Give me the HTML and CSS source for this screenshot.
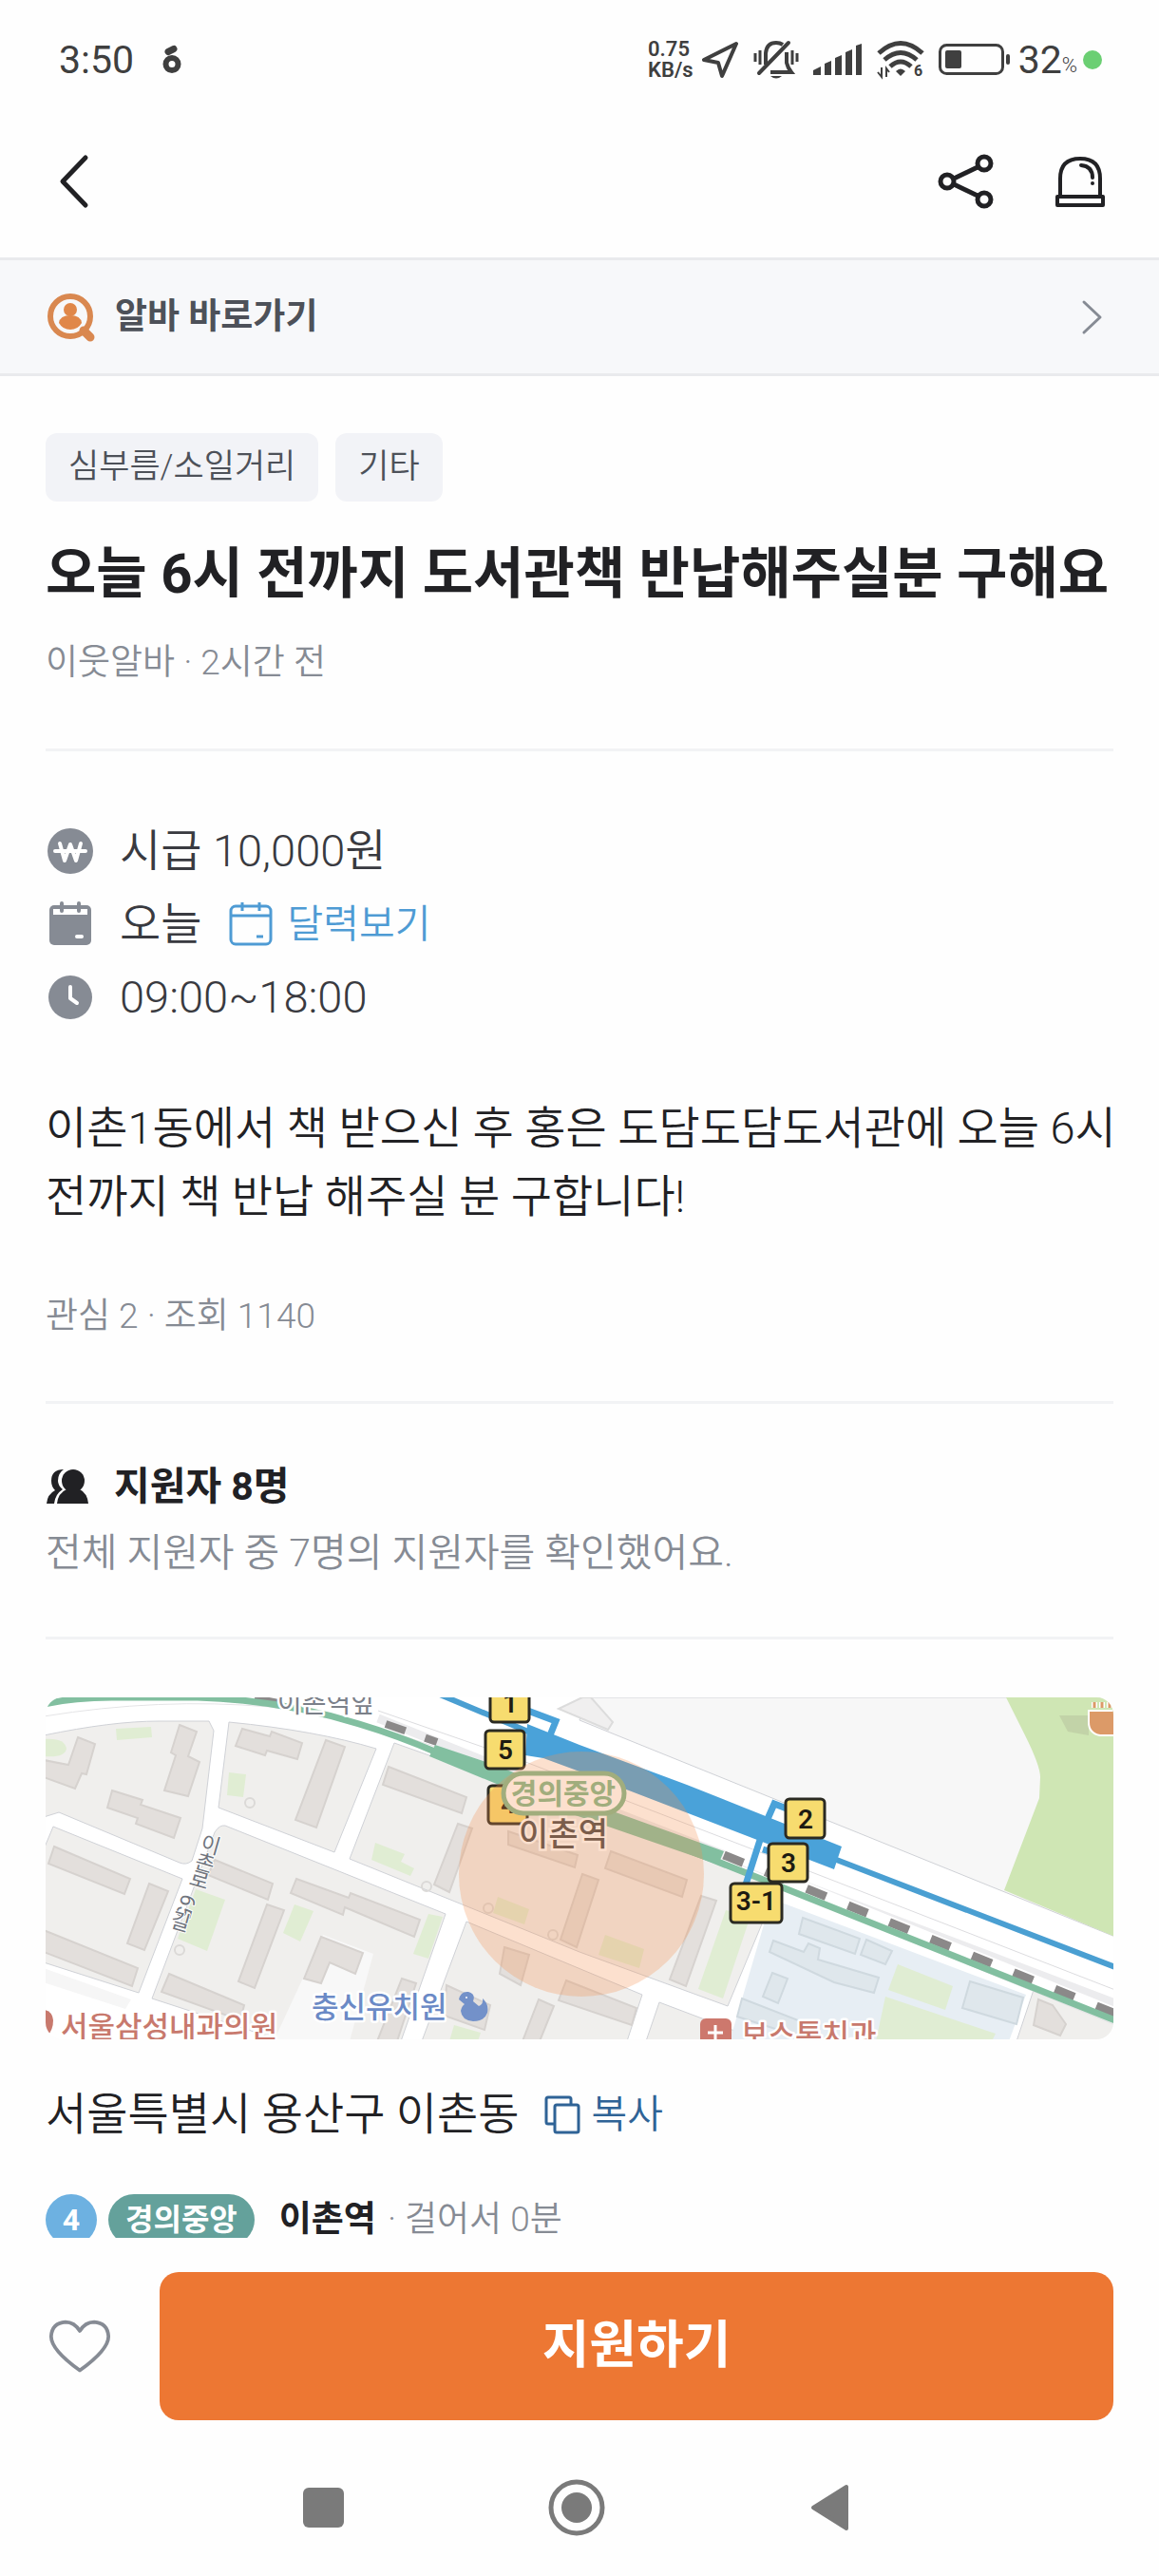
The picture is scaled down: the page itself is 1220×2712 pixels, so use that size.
FILE: index.html
```html
<!DOCTYPE html>
<html lang="ko">

<head>
<meta charset="utf-8">
<meta name="viewport" content="width=device-width, initial-scale=1">
<title>이웃알바</title>
<link rel="stylesheet" href="styles.css">
</head>

<body>

<div class="status">
  <span class="time">3:50</span>
  <svg class="app-icon" width="20" height="32" viewBox="0 0 20 32" aria-hidden="true">
    <circle cx="10" cy="20.500" r="6.500" fill="none" stroke="#3f3f3f" stroke-width="6"/>
    <path d="M6 7.500 L12 4.500" stroke="#3f3f3f" stroke-width="7" stroke-linecap="round"/>
  </svg>
  <div class="status-right">
    <span class="speed">0.75<br>KB/s</span>
    <svg width="40" height="40" viewBox="0 0 40 40" aria-hidden="true">
      <path d="M37 3 L3 20 L18 23 L22 37 Z" fill="none" stroke="#3f3f3f" stroke-width="4" stroke-linejoin="round"/>
    </svg>
    <svg class="ic-bell" width="48" height="42" viewBox="0 0 48 42" aria-hidden="true">
      <g fill="none" stroke="#3f3f3f" stroke-width="4">
        <path d="M13 26 V14 Q14 3 24 3 Q28 3 31 5"/>
        <path d="M35 13 V24 Q36 29 40 34 H18"/>
        <path d="M6 35 L37 3" stroke-linecap="round"/>
        <path d="M2 14 V23 M7 11 V26 M41 11 V26 M46 14 V23" stroke-width="3"/>
      </g>
      <path d="M18 38 H30 Q24 43 18 38 Z" fill="#3f3f3f"/>
    </svg>
    <svg class="ic-signal" width="52" height="34" viewBox="0 0 52 34" aria-hidden="true">
      <path d="M0 33 V28 L8 24 V33 Z M12 33 V21 L19 18 V33 Z M23 33 V15 L30 12 V33 Z M34 33 V9 L41 6 V33 Z M45 33 V2 L51 0 V33 Z" fill="#3f3f3f"/>
    </svg>
    <svg class="ic-wifi" width="50" height="42" viewBox="0 0 50 42" aria-hidden="true">
      <g fill="none" stroke="#3f3f3f" stroke-width="5">
        <path d="M2 14 Q25 -7 48 14"/>
        <path d="M8 21 Q25 6 42 21"/>
        <path d="M14 28 Q25 18 36 28"/>
      </g>
      <path d="M20 33 Q25 28 30 33 L25 38 Z" fill="#3f3f3f"/>
      <path d="M5 29 V39 L1 34 M10 39 V30 L13 34" fill="none" stroke="#3f3f3f" stroke-width="2"/>
      <text x="39" y="38" class="wifi-num">6</text>
    </svg>
    <svg class="ic-battery" width="76" height="34" viewBox="0 0 76 34" aria-hidden="true">
      <rect x="1.500" y="1.500" width="66" height="30" rx="7" fill="none" stroke="#3f3f3f" stroke-width="3"/>
      <rect x="7" y="7" width="17" height="19" rx="2" fill="#3f3f3f"/>
      <rect x="71" y="11" width="4" height="11" rx="2" fill="#3f3f3f"/>
    </svg>
    <span class="time">32</span><span class="percent">%</span>
    <span class="dot"></span>
  </div>
</div>

<header class="topbar">
  <button class="icon-btn" aria-label="뒤로">
    <svg width="60" height="60" viewBox="0 0 60 60">
      <path d="M42 5 L18 30 L42 55" fill="none" stroke="#212124" stroke-width="5" stroke-linecap="round" stroke-linejoin="round"/>
    </svg>
  </button>
  <button class="icon-btn share" aria-label="공유">
    <svg width="60" height="60" viewBox="0 0 60 60">
      <g fill="none" stroke="#212124" stroke-width="5">
        <circle cx="10" cy="30" r="7"/>
        <circle cx="49" cy="11" r="7"/>
        <circle cx="49" cy="49" r="7"/>
        <path d="M17 27 L42 15 M17 33 L42 45"/>
      </g>
    </svg>
  </button>
  <button class="icon-btn" aria-label="신고">
    <svg width="60" height="60" viewBox="0 0 60 60">
      <g fill="none" stroke="#212124" stroke-width="4" stroke-linejoin="round">
        <path d="M9 46 V27 Q9 6 30 6 Q51 6 51 27 V46"/>
        <rect x="6" y="46" width="48" height="9"/>
        <path d="M31 13 Q43 14 43 26" stroke-linecap="round"/>
      </g>
      <circle cx="43" cy="32" r="2" fill="#212124"/>
    </svg>
  </button>
</header>

<a class="shortcut" href="#">
  <svg width="52" height="52" viewBox="0 0 52 52" aria-hidden="true">
    <circle cx="25" cy="25" r="21" fill="none" stroke="#d98850" stroke-width="6"/>
    <path d="M39 40 L46 47" stroke="#d98850" stroke-width="9" stroke-linecap="round"/>
    <circle cx="25" cy="18" r="7" fill="#e08749"/>
    <path d="M13 32 Q14 24 25 24 Q36 24 37 32 Q33 39 25 39 Q17 39 13 32 Z" fill="#e08749"/>
  </svg>
  <span>알바 바로가기</span>
  <svg class="arrow" width="24" height="38" viewBox="0 0 24 38" aria-hidden="true">
    <path d="M3 3 L20 19 L3 35" fill="none" stroke="#868b94" stroke-width="3" stroke-linecap="round" stroke-linejoin="round"/>
  </svg>
</a>

<main>
  <section class="intro">
    <div class="tags">
      <span class="tag">심부름/소일거리</span>
      <span class="tag">기타</span>
    </div>
    <h1>오늘 6시 전까지 도서관책 반납해주실분 구해요</h1>
    <p class="meta">이웃알바 · 2시간 전</p>
  </section>

  <section class="detail">
    <ul class="facts">
      <li>
        <svg width="52" height="52" viewBox="0 0 52 52" aria-hidden="true">
          <circle cx="26" cy="26" r="24" fill="#868b94"/>
          <path d="M15 18 L20 36 L26 19 L32 36 L37 18 M10 26 H42" fill="none" stroke="#fff" stroke-width="4" stroke-linecap="round" stroke-linejoin="round"/>
        </svg>
        <span>시급 10,000원</span>
      </li>
      <li>
        <svg width="52" height="52" viewBox="0 0 52 52" aria-hidden="true">
          <rect x="4" y="6" width="44" height="42" rx="5" fill="#868b94"/>
          <path d="M8 10 H44 V16 H8 Z" fill="#fff"/>
          <path d="M17 4 V12 M35 4 V12" stroke="#868b94" stroke-width="4" stroke-linecap="round"/>
          <path d="M33 39 H38" stroke="#fff" stroke-width="4" stroke-linecap="round"/>
        </svg>
        <span>오늘</span>
        <a class="calendar" href="#">
          <svg width="52" height="52" viewBox="0 0 52 52" aria-hidden="true">
            <g fill="none" stroke="#4e9bd4" stroke-width="3">
              <rect x="5" y="7" width="42" height="40" rx="5"/>
              <path d="M5 17 H47"/>
              <path d="M17 3 V12 M35 3 V12"/>
              <path d="M32 39 H39"/>
            </g>
          </svg>
          달력보기
        </a>
      </li>
      <li>
        <svg width="52" height="52" viewBox="0 0 52 52" aria-hidden="true">
          <circle cx="26" cy="26" r="23" fill="#868b94"/>
          <path d="M26 15 V27 L33 32" fill="none" stroke="#fff" stroke-width="4" stroke-linecap="round" stroke-linejoin="round"/>
        </svg>
        <span>09:00~18:00</span>
      </li>
    </ul>
    <p class="desc">이촌1동에서 책 받으신 후 홍은 도담도담도서관에 오늘 6시<br>전까지 책 반납 해주실 분 구합니다!</p>
    <p class="meta">관심 2 · 조회 1140</p>
  </section>

  <section class="applicants">
    <h2>
      <svg width="46" height="40" viewBox="0 0 46 40" aria-hidden="true">
        <path d="M19 2 Q6 2 6 14 Q6 20 10 24 Q2 28 1 38 H9 Q10 28 18 23 Q13 19 13 14 Q13 6 19 2 Z" fill="#212124"/>
        <circle cx="29" cy="14" r="12" fill="#212124"/>
        <path d="M12 38 Q13 27 22 23 H36 Q44 27 45 38 Z" fill="#212124"/>
      </svg>
      지원자 8명
    </h2>
    <p>전체 지원자 중 7명의 지원자를 확인했어요.</p>
  </section>

  <section class="place">
    <svg class="map" viewBox="0 0 1124 360" preserveAspectRatio="xMidYMid slice" role="img" aria-label="이촌역 지도">
      <rect width="1124" height="360" fill="#fff"/>

      <!-- blocks -->
      <g fill="#f0efed" stroke="#cfd1d6" stroke-width="1">
        <path d="M-2 40 Q70 25 119 25 H172 L177 35 L165 138 L154 172 Q148 177 141 174 L14 121 L-2 126 Z"/>
        <path d="M193 26 Q285 35 348 54 L304 163 L182 116 Z"/>
        <path d="M367 48 L480 88 L770 200 L718 325 L562 268 L320 170 Z"/>
        <path d="M8 136 L144 191 L98 311 L-2 279 V160 Z"/>
        <path d="M189 135 L421 228 L374 362 H250 L112 317 L178 142 Q183 134 189 135 Z"/>
        <path d="M443 236 L628 313 L612 362 H396 Z"/>
        <path d="M646 321 L728 352 L720 362 H632 Z"/>
        <path d="M1040 308 L1126 342 V362 H1022 Z"/>
      </g>
      <path d="M-2 285 L90 318 L84 328 L-2 300 Z" fill="#f6f6f6"/>
      <path d="M240 362 L292 250 L345 270 L320 362 Z" fill="#f8f8f8"/>
      <path d="M570 0 H1126 V252 L562 24 Z" fill="#f7f7f7" stroke="#cfd1d6" stroke-width="1"/>
      <path d="M565 0 H574 L597 26 L592 34 L540 12 Z" fill="#f0efef" stroke="#dcdcdc" stroke-width="2"/>
      <path d="M764 212 L1032 313 L1014 362 H720 Z" fill="#e7eef4"/>
      <path d="M1011 0 L1031 40 Q1047 72 1047 84 L1046 106 L1009 203 L1126 252 V0 Z" fill="#cfe6b4"/>
      <path d="M1067 19 H1098 V40 L1076 36 Z" fill="#c2d3a8"/>

      <!-- green patches -->
      <g fill="#e0edd3">
        <path d="M-2 44 Q20 42 22 54 Q20 64 -2 62 Z"/>
        <path d="M74 33 L111 31 L112 42 L75 45 Z"/>
        <path d="M193 79 L211 81 L208 105 L191 103 Z"/>
        <path d="M158 202 L189 213 L170 267 L139 254 Z"/>
        <path d="M262 218 L282 225 L268 257 L250 248 Z"/>
        <path d="M403 228 L418 231 L403 275 L387 270 Z"/>
        <path d="M347 153 L378 165 L374 173 L388 180 L384 188 L343 171 Z"/>
        <path d="M476 210 L509 223 L504 239 L471 227 Z"/>
        <path d="M589 250 L630 265 L625 285 L582 271 Z"/>
        <path d="M716 224 L742 230 L713 317 L687 307 Z"/>
        <path d="M897 281 L955 304 L947 329 L887 308 Z"/>
        <path d="M884 315 L1000 354 L996 362 H874 Z"/>
        <path d="M430 345 L458 353 L455 362 H425 Z"/>
      </g>

      <!-- buildings -->
      <g fill="#e3dfdc" stroke="#d6d2cf" stroke-width="2">
        <path d="M34 42 L52 49 L43 81 L38 80 L31 96 L-2 84 V66 L24 71 Z"/>
        <path d="M141 29 L159 36 L150 62 L162 68 L150 104 L125 98 L137 61 L132 58 Z"/>
        <path d="M70 98 L102 108 L100 113 L142 127 L135 148 L95 133 L97 127 L65 116 Z"/>
        <path d="M207 33 L236 41 L238 36 L270 48 L265 65 L233 56 L231 61 L200 51 Z"/>
        <path d="M295 45 L315 52 L285 137 L263 129 Z"/>
        <path d="M361 73 L443 105 L438 122 L355 92 Z"/>
        <path d="M9 157 L89 191 L83 207 L3 175 Z"/>
        <path d="M109 196 L129 204 L104 266 L86 259 Z"/>
        <path d="M-2 245 L97 285 L91 304 L-2 268 Z"/>
        <path d="M178 171 L239 196 L234 213 L171 187 Z"/>
        <path d="M264 191 L319 211 L321 206 L394 234 L388 252 L315 221 L313 229 L258 206 Z"/>
        <path d="M233 218 L251 224 L220 306 L203 299 Z"/>
        <path d="M290 252 L334 269 L326 291 L299 279 L290 301 L272 296 Z"/>
        <path d="M130 291 L209 324 L205 340 L122 310 Z"/>
        <path d="M434 133 L449 138 L425 205 L409 197 Z"/>
        <path d="M487 141 L560 166 L557 179 L487 155 Z"/>
        <path d="M375 296 L390 301 L370 362 H349 Z"/>
        <path d="M422 303 L468 324 L462 350 L420 335 Z"/>
        <path d="M519 318 L535 325 L520 362 H502 Z"/>
        <path d="M595 162 L675 192 L670 210 L589 180 Z"/>
        <path d="M565 186 L582 192 L559 263 L542 255 Z"/>
        <path d="M690 209 L706 214 L674 304 L657 297 Z"/>
        <path d="M548 298 L622 327 L617 345 L540 319 Z"/>
        <path d="M483 263 L509 271 L500 303 L478 291 Z"/>
        <path d="M1045 318 L1060 324 L1074 344 L1068 356 L1040 345 Z"/>
      </g>
      <g fill="#dfe7ec" stroke="#cfd9df" stroke-width="2">
        <path d="M797 232 L857 254 L852 270 L793 249 Z"/>
        <path d="M766 256 L798 268 L803 259 L815 264 L813 276 L877 295 L872 311 L830 300 L762 268 Z"/>
        <path d="M864 255 L891 267 L884 281 L858 271 Z"/>
        <path d="M765 290 L781 296 L771 322 L755 315 Z"/>
        <path d="M973 299 L1029 316 L1022 344 L965 327 Z"/>
        <path d="M733 317 L800 343 L796 358 L728 336 Z"/>
      </g>
      <g fill="none" stroke="#dbd9d7" stroke-width="2">
        <circle cx="215" cy="111" r="5"/>
        <circle cx="141" cy="266" r="5"/>
        <circle cx="401" cy="199" r="5"/>
        <circle cx="466" cy="222" r="5"/>
        <circle cx="534" cy="250" r="5"/>
      </g>

      <!-- railway -->
      <path d="M-2 20 Q120 0 236 10 Q350 24 472 76 L1126 345" fill="none" stroke="#e4e4e6" stroke-width="1"/>
      <path d="M350 14 L500 66 L760 166 L1126 308" fill="none" stroke="#dcdcdf" stroke-width="1"/>
      <path d="M350 22 L400 42 L500 82 L720 168 L1126 322" fill="none" stroke="#ececee" stroke-width="9"/>
      <path d="M220 1 L245 6" stroke="#8b8989" stroke-width="8"/>
      <path d="M358 28 L412 47" stroke="#8b8989" stroke-width="8" stroke-dasharray="22 22"/>
      <path d="M714 164 L1126 331" stroke="#fff" stroke-width="9"/>
      <path d="M714 166 L1126 333" stroke="#8b8989" stroke-width="9" stroke-dasharray="22 25"/>
      <path d="M-2 7 Q30 0 70 0 H160 Q250 3 330 28 Q370 40 412 58 L700 170 L1126 340" fill="none" stroke="#82bfa0" stroke-width="7"/>
      <path d="M410 50 L475 72 L575 112 L714 162 L708 176 L540 118 L404 62 Z" fill="#82bfa0"/>

      <!-- line 4 -->
      <path d="M415 -3 L508 36 M830 170 L1126 284" stroke="#4a9fd2" stroke-width="6"/>
      <path d="M507 28 L562 50 L675 92 L838 157 L830 181 L749 150 L562 78 L524 64 L505 61 Z" fill="#4aa2d9"/>
      <path d="M505 13 L537 25 L531 40 M760 128 L767 112 L780 117 M752 150 L737 197 M755 160 L765 163" fill="none" stroke="#4aa2d9" stroke-width="7"/>

      <!-- labels -->
      <g class="poi">
        <text x="244" y="16" class="road">이촌역앞</text>
        <text class="street" x="162 156 150 147 144 140 130" y="160 179 197 200 206 218 241" rotate="16 16 16 0 106 106 16">이촌로 65길</text>
        <text x="280" y="337" class="school">충신유치원</text>
        <text x="16" y="358" class="clinic">서울삼성내과의원</text>
        <text x="732" y="366" class="clinic">보스톤치과</text>
      </g>
      <path d="M435 318 Q437 309 445 310 Q453 312 450 320 L456 325 Q461 323 460 317 Q467 323 465 332 Q462 341 450 341 Q438 340 437 330 Q438 325 441 323 Z" fill="#7391c9"/>
      <circle cx="443" cy="316" r="1" fill="#fff"/>
      <path d="M-2 329 Q7 330 8 340 Q8 350 2 356 H-2 Z" fill="#c8796d"/>
      <rect x="689" y="338" width="33" height="34" rx="6" fill="#cd786d"/>
      <path d="M705 345 V362 M697 353 H713" stroke="#fff" stroke-width="3"/>
      <path d="M1098 14 H1126 V40 H1110 Q1098 38 1098 26 Z" fill="#dc9a68" stroke="#fff" stroke-width="2"/>
      <path d="M1104 5 V11 M1112 5 V11 M1120 5 V11" stroke="#fff" stroke-width="6"/>
      <path d="M1104 5 V11 M1112 5 V11 M1120 5 V11" stroke="#dc9a68" stroke-width="3"/>

      <!-- exits -->
      <g class="exit">
        <rect x="468" y="-14" width="41" height="40" rx="4"/>
        <rect x="463" y="35" width="41" height="40" rx="4"/>
        <rect x="466" y="93" width="41" height="40" rx="4"/>
        <rect x="779" y="107" width="41" height="41" rx="4"/>
        <rect x="761" y="154" width="41" height="40" rx="4"/>
        <rect x="721" y="196" width="54" height="41" rx="4"/>
        <text x="489" y="16">1</text>
        <text x="484" y="65">5</text>
        <text x="487" y="122">4</text>
        <text x="800" y="138">2</text>
        <text x="782" y="184">3</text>
        <text x="748" y="224">3-1</text>
      </g>
      <rect x="482" y="80" width="127" height="42" rx="21" fill="#fff" stroke="#82b98f" stroke-width="5"/>
      <text x="545" y="112" class="line-name">경의중앙</text>
      <text x="545" y="156" class="station-name">이촌역</text>
      <circle cx="564" cy="186" r="129" fill="#f5914f" fill-opacity="0.280"/>
    </svg>

    <div class="address">
      <span>서울특별시 용산구 이촌동</span>
      <button class="copy">
        <svg width="44" height="44" viewBox="0 0 44 44" aria-hidden="true">
          <g fill="#fff" stroke="#2f6396" stroke-width="3" stroke-linejoin="round">
            <path d="M12 32 H6 Q4 32 4 30 V6 Q4 4 6 4 H28 Q30 4 30 6 V11" fill="none"/>
            <rect x="13" y="12" width="25" height="29" rx="2"/>
          </g>
        </svg>
        복사
      </button>
    </div>
    <div class="station">
      <span class="line-badge">4</span>
      <span class="line-badge wide">경의중앙</span>
      <strong>이촌역</strong>
      <span>· 걸어서 0분</span>
    </div>
  </section>
</main>

<div class="action">
  <button class="like" aria-label="관심">
    <svg width="66" height="60" viewBox="0 0 70 62">
      <path d="M35 58 Q3 35 3 20 Q4 5 19 4 Q29 4 35 14 Q41 4 51 4 Q66 5 67 20 Q67 35 35 58 Z" fill="none" stroke="#868b94" stroke-width="4" stroke-linejoin="round"/>
    </svg>
  </button>
  <button class="apply">지원하기</button>
</div>

<nav class="sysnav">
  <button aria-label="최근 앱">
    <svg width="60" height="60" viewBox="0 0 60 60"><rect x="8" y="9" width="43" height="42" rx="6" fill="#7a7a7a"/></svg>
  </button>
  <button aria-label="홈">
    <svg width="60" height="60" viewBox="0 0 60 60"><circle cx="30" cy="30" r="27" fill="none" stroke="#7a7a7a" stroke-width="5"/><circle cx="30" cy="30" r="16" fill="#7a7a7a"/></svg>
  </button>
  <button aria-label="이전">
    <svg width="60" height="60" viewBox="0 0 60 60"><path d="M13 30 L48 8 V52 Z" fill="#7a7a7a" stroke="#7a7a7a" stroke-width="4" stroke-linejoin="round"/></svg>
  </button>
</nav>

</body>
</html>
```

FILE: styles.css
```css
* {
  box-sizing: border-box;
}
body {
  margin: 0;
  height: 100vh;
  display: flex;
  flex-direction: column;
  background: #fefefe;
  color: #212124;
  font-family: Roboto, "Noto Sans CJK KR", sans-serif;
  font-size: 47px;
  font-weight: 350;
  line-height: 72px;
}
h1, h2, p, ul {
  margin: 0;
  padding: 0;
}
a {
  color: inherit;
  text-decoration: none;
}
button {
  padding: 0;
  border: 0;
  background: none;
  color: inherit;
  font: inherit;
}
svg {
  display: block;
  flex: none;
}

/* status bar */
.status {
  display: flex;
  align-items: center;
  height: 126px;
  padding: 0 60px 0 62px;
  color: #3f3f3f;
}
.time {
  font-size: 41px;
  font-weight: 400;
}
.app-icon {
  margin-left: 30px;
}
.status-right {
  display: flex;
  align-items: center;
  margin-left: auto;
}
.speed {
  margin-right: 8px;
  font-size: 22px;
  font-weight: 600;
  line-height: 22px;
}
.ic-bell, .ic-signal, .ic-wifi, .ic-battery {
  margin-left: 15px;
}
.ic-battery {
  margin-right: 8px;
}
.wifi-num {
  font-size: 16px;
  font-weight: 700;
  fill: #3f3f3f;
}
.percent {
  padding-top: 12px;
  font-size: 22px;
}
.dot {
  width: 20px;
  height: 20px;
  margin-left: 6px;
  border-radius: 50%;
  background: #6bcf73;
}

/* title bar */
.topbar {
  display: flex;
  align-items: center;
  height: 145px;
  padding: 0 53px 15px 48px;
}
.icon-btn {
  display: block;
}
.share {
  margin-left: auto;
  margin-right: 60px;
}

.shortcut {
  display: flex;
  align-items: center;
  gap: 20px;
  height: 125px;
  flex: none;
  padding: 0 58px 0 49px;
  border-top: 3px solid #e9eaed;
  border-bottom: 3px solid #e9eaed;
  background: #f7f8fa;
  color: #4d5159;
  font-size: 37px;
  font-weight: 700;
}
.shortcut .arrow {
  margin-left: auto;
}

/* post */
main {
  flex: 1;
  min-height: 0;
  overflow: hidden;
  padding: 0 48px;
}
section {
  border-bottom: 3px solid #f2f3f5;
}
.intro {
  padding: 60px 0 66px;
}
.tags {
  display: flex;
  gap: 18px;
}
.tag {
  padding: 0 24px;
  border-radius: 12px;
  background: #f2f3f7;
  color: #4d5159;
  font-size: 35px;
}
h1 {
  margin: 40px 0 34px;
  font-size: 58px;
  line-height: 72px;
  white-space: nowrap;
}
.meta {
  color: #868b94;
  font-size: 37px;
  line-height: 48px;
}
.detail {
  padding: 66px 0 65px;
}
.facts {
  list-style: none;
  color: #393a40;
}
.facts li {
  display: flex;
  align-items: center;
  gap: 26px;
  height: 77px;
}
.calendar {
  display: flex;
  align-items: center;
  gap: 12px;
  color: #4e9bd4;
  font-size: 41px;
}
.desc {
  margin: 64px 0 66px;
  white-space: nowrap;
}
.applicants {
  padding: 52px 0 53px;
}
h2 {
  display: flex;
  align-items: center;
  gap: 26px;
  font-size: 41px;
  line-height: 70px;
}
.applicants p {
  color: #868b94;
  font-size: 41px;
  line-height: 70px;
}

/* place */
.place {
  padding-top: 61px;
}
.map {
  width: 100%;
  height: 360px;
  border-radius: 18px;
}
.poi text {
  font-size: 31px;
  font-weight: 500;
  stroke: #fff;
  stroke-width: 5px;
  stroke-linejoin: round;
  paint-order: stroke;
}
.poi .road {
  font-size: 28px;
  font-weight: 400;
  fill: #7b8089;
}
.poi .street {
  font-size: 22px;
  font-weight: 400;
  fill: #70757e;
  stroke-width: 2px;
}
.poi .school {
  fill: #6b8ac6;
}
.poi .clinic {
  fill: #c8796d;
}
.exit rect {
  fill: #f7dc6f;
  stroke: #2b2a22;
  stroke-width: 3px;
}
.exit text {
  font-size: 28px;
  font-weight: 600;
  text-anchor: middle;
  fill: #1d1b12;
}
.line-name {
  font-size: 30px;
  font-weight: 700;
  text-anchor: middle;
  fill: #82b98f;
}
.station-name {
  font-size: 34px;
  font-weight: 500;
  text-anchor: middle;
  fill: #4d4a4a;
  stroke: #fff;
  stroke-width: 5px;
  paint-order: stroke;
}
.address {
  display: flex;
  align-items: center;
  gap: 24px;
  margin: 43px 0 48px;
}
.copy {
  display: flex;
  align-items: center;
  gap: 8px;
  color: #2f6396;
  font-size: 41px;
}
.station {
  display: flex;
  align-items: center;
  gap: 12px;
  color: #868b94;
  font-size: 37px;
  line-height: 54px;
}
.station strong {
  margin-left: 14px;
  color: #212124;
  font-weight: 700;
}
.line-badge {
  width: 54px;
  border-radius: 27px;
  background: #6db1e1;
  color: #fff;
  font-size: 32px;
  font-weight: 700;
  text-align: center;
}
.line-badge.wide {
  width: auto;
  padding: 0 18px;
  background: #64a19b;
}

/* bottom buttons */
.action {
  display: flex;
  align-items: center;
  gap: 51px;
  padding: 36px 48px 20px 51px;
}
.apply {
  flex: 1;
  height: 156px;
  border-radius: 20px;
  background: #ed7733;
  color: #fff;
  font-size: 54px;
  font-weight: 700;
}
.sysnav {
  display: flex;
  justify-content: center;
  gap: 206px;
  padding: 42px 6px 42px 0;
}
```
